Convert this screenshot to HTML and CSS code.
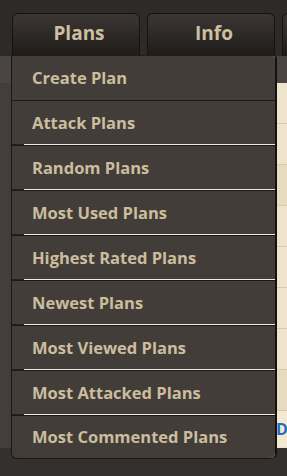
FILE: index.html
```html
<!DOCTYPE html>
<html>
<head>
    <title>Plans</title>
    <link rel="stylesheet" href="styles.css">
</head>
<body>
<div class="topbar">
    <div class="tab">Plans</div>
    <div class="tab">Info</div>
    <div class="tab"></div>
</div>

<div class="subbar"></div>

<div class="content">
    <div class="side"></div>
    <div class="main">
        <div class="row"></div>
        <div class="row"></div>
        <div class="row row-dark"></div>
        <div class="row"></div>
        <div class="row"></div>
        <div class="row"></div>
        <div class="row"></div>
        <div class="row row-dark"></div>
        <div class="row row-last">
            <a href="#" class="link">Details</a>
        </div>
    </div>
</div>

<div class="footer"></div>

<ul class="dropdown">
    <li>Create Plan</li>
    <li>Attack Plans</li>
    <li>Random Plans</li>
    <li>Most Used Plans</li>
    <li>Highest Rated Plans</li>
    <li>Newest Plans</li>
    <li>Most Viewed Plans</li>
    <li>Most Attacked Plans</li>
    <li>Most Commented Plans</li>
</ul>
</body>
</html>
```

FILE: styles.css
```css
body {
    margin: 0;
    width: 287px;
    height: 476px;
    overflow: hidden;
    position: relative;
    font-family: "Open Sans", "Noto Sans", sans-serif;
    background-color: #33302d;
}

.topbar {
    height: 56px;
    box-sizing: border-box;
    padding: 13px 0 0 12px;
    display: flex;
    gap: 7px;
    background-color: #2e2a28;
    overflow: hidden;
}

.tab {
    flex: 0 0 128px;
    height: 43px;
    box-sizing: border-box;
    padding: 6px 0 0 6px;
    border: 1px solid #161413;
    border-bottom: none;
    border-radius: 6px 6px 0 0;
    background: linear-gradient(to bottom, #3c3734, #1e1b19);
    color: #cdbf9f;
    font-size: 19px;
    font-weight: 700;
    text-align: center;
}

.subbar {
    height: 27px;
    background-color: #4a4542;
}

.content {
    display: flex;
    height: 365px;
}
.side {
    width: 24px;
    background-color: #433e3b;
}
.main {
    flex: 1;
    min-width: 0;
    background-color: #efe3cb;
    overflow: hidden;
}

.row {
    height: 40px;
    border-bottom: 1px solid #d6cab2;
    display: flex;
    align-items: center;
    padding-left: 252px;
}
.row-dark { background-color: #e6dac0; }
.row-last {
    height: 36px;
    border-bottom: none;
    background-color: #f3e8d2;
}

.link {
    flex: none;
    color: #1b6ec2;
    font-weight: 700;
    font-size: 16px;
    text-decoration: none;
    white-space: nowrap;
}

.footer {
    height: 28px;
    background-color: #33302d;
}

.dropdown {
    position: absolute;
    top: 55px;
    left: 11px;
    width: 266px;
    box-sizing: border-box;
    margin: 0;
    padding: 0;
    list-style: none;
    border-top: 1px solid #1f1c1a;
    border-left: 1px solid #1a1816;
    border-right: 2px solid #141211;
    border-bottom: 1px solid #1a1816;
    border-radius: 0 4px 6px 6px;
    background: linear-gradient(to right, #25211f 12px, #f4ead6 12px);
    overflow: hidden;
}
.dropdown li {
    height: 43px;
    line-height: 43px;
    padding-left: 20px;
    background-color: #433d3a;
    border-top: 1px solid #1c1a18;
    color: #cbbd9e;
    font-size: 16.5px;
    font-weight: 700;
}
.dropdown li:first-child {
    height: 44px;
    line-height: 44px;
    border-top: none;
}
.dropdown li + li + li { margin-top: 1px; }
.dropdown li:last-child {
    height: 42px;
    line-height: 42px;
}
```
